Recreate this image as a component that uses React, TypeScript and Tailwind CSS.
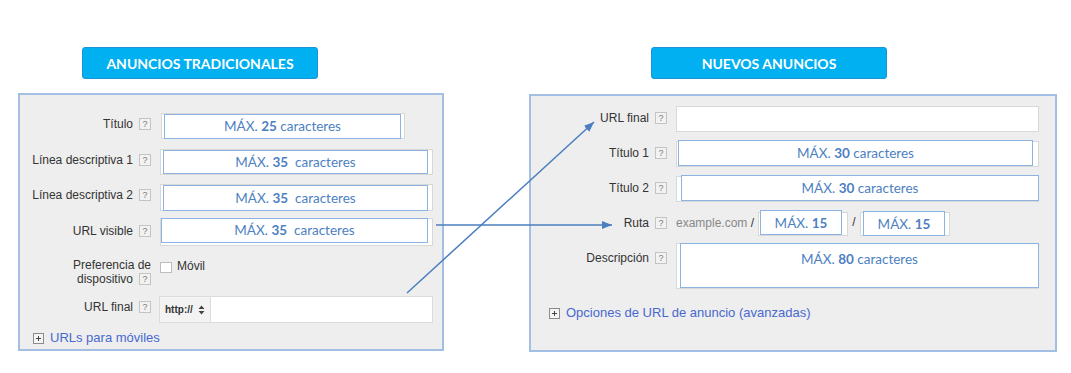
import React from "react";

const Help = ({ cls = "" }: { cls?: string }) => (
  <span
    className={
      "flex h-[12px] w-[12px] shrink-0 items-center justify-center border border-[#c4c4c4] bg-[#f2f2f2] text-[9px] leading-none text-[#7a7a7a] " +
      cls
    }
  >
    ?
  </span>
);

const Max = ({ n, extra = "" }: { n: string; extra?: string }) => (
  <span>
    MÁX. <b className="font-bold">{n}</b>
    {extra}
  </span>
);

const PlusBox = () => (
  <svg width="11" height="11" viewBox="0 0 11 11" className="shrink-0">
    <rect x="0.5" y="0.5" width="10" height="10" fill="#f4f4f4" stroke="#8c8c8c" />
    <path d="M3 5.5h5M5.5 3v5" stroke="#444" strokeWidth="1" />
  </svg>
);

const boxText =
  "flex items-center justify-center text-[13.5px] text-[#4d7fc2] font-['Lato',sans-serif]";

export default function App() {
  return (
    <div className="relative h-[373px] w-[1071px] overflow-hidden bg-white font-['Liberation_Sans',Arial,sans-serif] text-[12px] text-[#333]">
      <div className="flex gap-[85px] pl-[18px] pt-[47px]">
        {/* LEFT */}
        <div className="flex w-[426px] flex-col">
          <div className="ml-[64px] flex h-[32px] w-[236px] items-center justify-center rounded-[3px] border border-[#1a94d6] bg-[#00b0f0] font-['Lato',sans-serif] text-[14px] font-bold text-white">
            ANUNCIOS TRADICIONALES
          </div>
          <div className="mt-[14px] flex h-[258px] flex-col border-2 border-[#a3bfe3] bg-[#eeeeee] pt-[18px]">
            {/* Titulo */}
            <div className="flex h-[26px] items-start">
              <div className="w-[113px] pt-[4px] text-right leading-[14px]">Título</div>
              <Help cls="ml-[6px] mt-[5px]" />
              <div className="relative ml-[10px] h-[26px] w-[244px] border border-[#d8d8d8] bg-white">
                <div className={"absolute left-[2px] top-[0px] h-[25px] w-[237px] border border-[#8db3e2] bg-white " + boxText}>
                  <Max n="25" extra=" caracteres" />
                </div>
              </div>
            </div>
            {/* Linea 1 */}
            <div className="mt-[10px] flex h-[26px] items-start">
              <div className="w-[113px] pt-[4px] text-right leading-[14px]">Línea descriptiva 1</div>
              <Help cls="ml-[6px] mt-[5px]" />
              <div className="relative ml-[9px] h-[26px] w-[273px] border border-[#d8d8d8] bg-white">
                <div className={"absolute left-[2px] top-[0px] h-[24px] w-[265px] border border-[#8db3e2] bg-white " + boxText}>
                  <Max n="35" extra={"\u00a0 caracteres"} />
                </div>
              </div>
            </div>
            {/* Linea 2 */}
            <div className="mt-[9px] flex h-[27px] items-start">
              <div className="w-[113px] pt-[4px] text-right leading-[14px]">Línea descriptiva 2</div>
              <Help cls="ml-[6px] mt-[5px]" />
              <div className="relative ml-[9px] h-[27px] w-[273px] border border-[#d8d8d8] bg-white">
                <div className={"absolute left-[2px] top-[0px] h-[26px] w-[265px] border border-[#8db3e2] bg-white " + boxText}>
                  <Max n="35" extra={"\u00a0 caracteres"} />
                </div>
              </div>
            </div>
            {/* URL visible */}
            <div className="mt-[7px] flex h-[28px] items-start">
              <div className="w-[113px] pt-[6px] text-right leading-[14px]">URL visible</div>
              <Help cls="ml-[6px] mt-[7px]" />
              <div className="relative ml-[9px] h-[28px] w-[273px] border border-[#d8d8d8] bg-white">
                <div className={"absolute left-[0px] top-[-1px] h-[25px] w-[267px] border border-[#8db3e2] bg-white " + boxText}>
                  <Max n="35" extra={"\u00a0 caracteres"} />
                </div>
              </div>
            </div>
            {/* Preferencia */}
            <div className="mt-[13px] flex h-[27px] items-start">
              <div className="flex w-[131px] flex-col items-end leading-[13.5px]">
                <span>Preferencia de</span>
                <span className="flex items-center">
                  dispositivo
                  <Help cls="ml-[6px]" />
                </span>
              </div>
              <span className="ml-[9px] mt-[3px] h-[11px] w-[12px] border border-[#bdbdbd] bg-white" />
              <span className="ml-[5px] leading-[14px]">Móvil</span>
            </div>
            {/* URL final */}
            <div className="mt-[10px] flex h-[27px] items-start">
              <div className="w-[113px] pt-[4px] text-right leading-[14px]">URL final</div>
              <Help cls="ml-[6px] mt-[5px]" />
              <div className="ml-[8px] flex h-[27px] w-[274px]">
                <div className="flex h-full w-[52px] items-center border border-[#dcdcdc] bg-[#f3f3f3] pl-[5px] text-[10px] font-bold text-[#333]">
                  http://
                  <svg width="7" height="10" viewBox="0 0 7 10" className="ml-[5px]">
                    <path d="M3.5 0.5L6.5 4H0.5z M3.5 9.5L6.5 6H0.5z" fill="#444" />
                  </svg>
                </div>
                <div className="h-full flex-1 border border-l-0 border-[#dcdcdc] bg-white" />
              </div>
            </div>
            {/* URLs para moviles */}
            <div className="mt-[7px] flex items-center pl-[13px]">
              <PlusBox />
              <span className="ml-[6px] text-[13px] leading-[16px] text-[#4769cf]">URLs para móviles</span>
            </div>
          </div>
        </div>

        {/* RIGHT */}
        <div className="flex w-[528px] flex-col">
          <div className="ml-[122px] flex h-[32px] w-[236px] items-center justify-center rounded-[3px] border border-[#1a94d6] bg-[#00b0f0] font-['Lato',sans-serif] text-[14px] font-bold text-white">
            NUEVOS ANUNCIOS
          </div>
          <div className="mt-[15px] flex h-[258px] flex-col border-2 border-[#a3bfe3] bg-[#eeeeee] pt-[10px]">
            {/* URL final */}
            <div className="flex h-[26px] items-start">
              <div className="w-[118px] pt-[5px] text-right leading-[14px]">URL final</div>
              <Help cls="ml-[6px] mt-[6px]" />
              <div className="ml-[9px] h-[26px] w-[363px] border border-[#d8d8d8] bg-white" />
            </div>
            {/* Titulo 1 */}
            <div className="mt-[9px] flex h-[26px] items-start">
              <div className="w-[118px] pt-[5px] text-right leading-[14px]">Título 1</div>
              <Help cls="ml-[6px] mt-[6px]" />
              <div className="relative ml-[9px] h-[26px] w-[363px] border border-[#d8d8d8] bg-white">
                <div className={"absolute left-[1px] top-[-2px] h-[26px] w-[355px] border border-[#8db3e2] bg-white " + boxText}>
                  <Max n="30" extra=" caracteres" />
                </div>
              </div>
            </div>
            {/* Titulo 2 */}
            <div className="mt-[9px] flex h-[26px] items-start">
              <div className="w-[118px] pt-[5px] text-right leading-[14px]">Título 2</div>
              <Help cls="ml-[6px] mt-[6px]" />
              <div className="relative ml-[9px] h-[26px] w-[363px] border border-[#d8d8d8] bg-white">
                <div className={"absolute left-[4px] top-[-2px] h-[26px] w-[358px] border border-[#8db3e2] bg-white " + boxText}>
                  <Max n="30" extra=" caracteres" />
                </div>
              </div>
            </div>
            {/* Ruta */}
            <div className="mt-[10px] flex h-[24px] items-start">
              <div className="w-[118px] pt-[4px] text-right leading-[14px]">Ruta</div>
              <Help cls="ml-[6px] mt-[5px]" />
              <span className="ml-[9px] w-[82px] pt-[4px] leading-[14px] text-[#888]">
                example.com <span className="text-[#333]">/</span>
              </span>
              <div className="relative h-[24px] w-[90px] border border-[#d8d8d8] bg-white">
                <div className={"absolute left-[1px] top-[-3px] h-[25px] w-[82px] border border-[#8db3e2] bg-white pt-[2px] " + boxText}>
                  <Max n="15" />
                </div>
              </div>
              <span className="w-[12px] pt-[3px] text-center leading-[14px]">/</span>
              <div className="relative h-[24px] w-[90px] border border-[#d8d8d8] bg-white">
                <div className={"absolute left-[2px] top-[-2px] h-[25px] w-[82px] border border-[#8db3e2] bg-white pt-[2px] " + boxText}>
                  <Max n="15" />
                </div>
              </div>
            </div>
            {/* Descripcion */}
            <div className="mt-[7px] flex h-[46px] items-start">
              <div className="w-[118px] pt-[8px] text-right leading-[14px]">Descripción</div>
              <Help cls="ml-[6px] mt-[9px]" />
              <div className="relative ml-[9px] h-[46px] w-[363px] border border-[#d8d8d8] bg-white">
                <div className="absolute left-[3px] top-[-1px] flex h-[45px] w-[359px] justify-center border border-[#8db3e2] bg-white pt-[6px] font-['Lato',sans-serif] text-[13.5px] leading-[18px] text-[#4d7fc2]">
                  <Max n="80" extra=" caracteres" />
                </div>
              </div>
            </div>
            {/* Opciones */}
            <div className="mt-[16px] flex items-center pl-[18px]">
              <PlusBox />
              <span className="ml-[6px] text-[13px] leading-[16px] text-[#4769cf]">
                Opciones de URL de anuncio (avanzadas)
              </span>
            </div>
          </div>
        </div>
      </div>

      {/* Arrows overlay */}
      <svg className="pointer-events-none absolute left-0 top-0" width="1071" height="373" viewBox="0 0 1071 373">
        <defs>
          <marker id="ah" markerWidth="10" markerHeight="8" refX="10" refY="4" orient="auto" markerUnits="userSpaceOnUse">
            <path d="M0 0L10 4L0 8z" fill="#4a7ebf" />
          </marker>
        </defs>
        <line x1="407" y1="293" x2="594" y2="122" stroke="#4a7ebf" strokeWidth="1.5" markerEnd="url(#ah)" />
        <line x1="436" y1="225" x2="612" y2="225" stroke="#4a7ebf" strokeWidth="1.5" markerEnd="url(#ah)" />
      </svg>
    </div>
  );
}
